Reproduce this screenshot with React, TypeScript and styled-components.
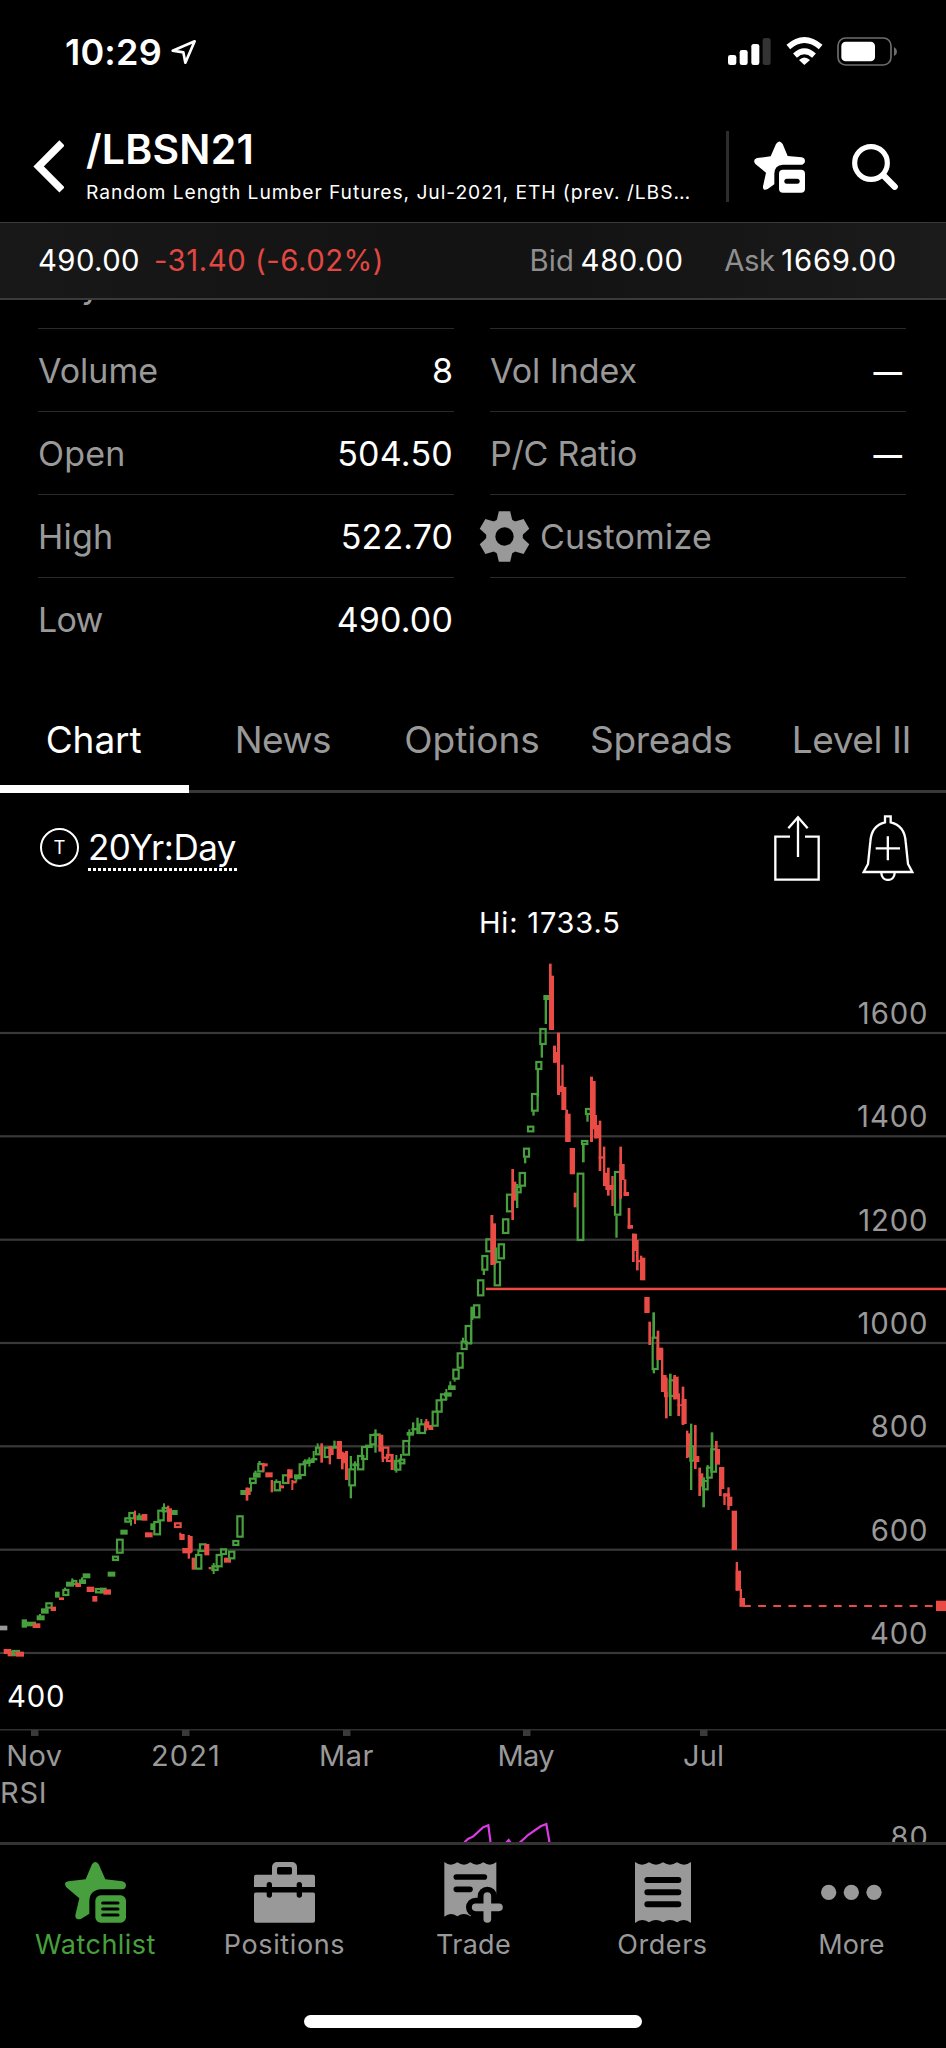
import React from 'react';
import styled, { createGlobalStyle, css } from 'styled-components';

const color = {
  bg: '#000000',
  text: '#ffffff',
  muted: '#999999',
  rule: '#2a2a2a',
  line: '#383838',
  up: '#47a03d',
  down: '#ea4b45',
  rsi: '#dc3ae6',
};

const GlobalStyle = createGlobalStyle`
  * { box-sizing: border-box; }
  html, body { margin: 0; background: ${color.bg}; }
  body { font-family: Inter, "Liberation Sans", sans-serif; color: ${color.text}; }
  svg { display: block; flex: none; }
`;

const Screen = styled.div`
  display: flex;
  flex-direction: column;
  width: 100%;
  height: 2048px;
  overflow: hidden;
  background: ${color.bg};
`;

const Label = styled.span<{ $size: number; $track?: number; $tone?: string; $weight?: number }>`
  font-size: ${p => p.$size}px;
  letter-spacing: ${p => p.$track ?? 0}px;
  color: ${p => p.$tone ?? color.text};
  font-weight: ${p => p.$weight ?? 400};
  white-space: pre;
`;

/* ---------- status bar ---------- */

const StatusBar = styled.div`
  display: flex;
  align-items: center;
  height: 104px;
  padding: 0 49px 1px 65px;
  flex: none;
`;

const LocationArrow = styled.svg`
  margin-left: 9px;
`;

const StatusIcons = styled.div`
  display: flex;
  align-items: center;
  gap: 14.5px;
  margin-left: auto;
`;

/* ---------- header ---------- */

const Header = styled.header`
  display: flex;
  align-items: center;
  height: 118px;
  padding: 7px 48px 0 33px;
  flex: none;
`;

const TitleBlock = styled.div`
  display: flex;
  flex-direction: column;
  width: 640px;
  height: 109px;
  padding-top: 12px;
  margin-left: 22px;
`;

const Title = styled(Label)`
  line-height: 50px;
`;

const Subtitle = styled(Label)`
  line-height: 36px;
`;

const HeaderRule = styled.div`
  width: 3px;
  height: 71px;
  margin: -1px 25px 0 auto;
  background: #2d2d2d;
`;

const HeaderActions = styled.div`
  display: flex;
  align-items: center;
  gap: 47px;
`;

/* ---------- quote strip ---------- */

const QuoteStrip = styled.div`
  display: flex;
  align-items: center;
  height: 78px;
  padding: 0 49px 1px 38px;
  border-top: 1px solid #3a3a3a;
  border-bottom: 2px solid #3a3a3a;
  background: linear-gradient(90deg, #181818 0%, #131313 45%, #131313 60%, #1b1b1b 100%);
  flex: none;
`;

const Change = styled(Label)`
  margin-left: 14px;
`;

const QuotePair = styled.div`
  display: flex;
  align-items: center;
  gap: 6.5px;
  & + & {
    margin-left: 40.5px;
  }
`;

const QuoteSide = styled.div`
  display: flex;
  margin-left: auto;
`;

/* ---------- statistics ---------- */

const Stats = styled.section`
  display: grid;
  grid-template-columns: 416px 416px;
  column-gap: 36px;
  height: 361px;
  padding-left: 38px;
  overflow: hidden;
  flex: none;
`;

const StatColumn = styled.div`
  margin-top: -54px;
`;

const StatRow = styled.div<{ $last?: boolean; $scrolled?: boolean }>`
  display: flex;
  align-items: center;
  justify-content: space-between;
  height: 83px;
  padding: 0 1px ${p => (p.$scrolled ? 4 : 0)}px 0;
  border-bottom: 1px solid ${p => (p.$last ? 'transparent' : color.rule)};
`;

const EmptyValue = styled(Label)`
  padding: 3px 3px 0 0;
`;

const CustomizeRow = styled(StatRow)`
  justify-content: flex-start;
  gap: 10px;
  margin-left: -11px;
  border-bottom: 0;
`;

const ColumnRule = styled.div`
  height: 1px;
  margin-top: -1px;
  background: ${color.rule};
`;

/* ---------- tabs ---------- */

const Tabs = styled.nav`
  display: grid;
  grid-template-columns: repeat(5, 1fr);
  height: 103px;
  margin-top: 29px;
  border-bottom: 3px solid ${color.line};
  flex: none;
`;

const Tab = styled.div<{ $active?: boolean }>`
  position: relative;
  display: flex;
  align-items: center;
  justify-content: center;
  padding: 0 2px 2px 0;
  &:last-child {
    padding-right: 0;
  }
  ${p =>
    p.$active &&
    css`
      &::after {
        content: '';
        position: absolute;
        left: 0;
        right: 0;
        bottom: -3px;
        height: 8px;
        background: ${color.text};
      }
    `}
`;

/* ---------- chart ---------- */

const ChartToolbar = styled.div`
  display: flex;
  align-items: center;
  height: 107px;
  padding: 0 32px 0 40px;
  flex: none;
`;

const TypeBadge = styled.div`
  display: flex;
  align-items: center;
  justify-content: center;
  width: 39px;
  height: 39px;
  margin-top: 1px;
  border: 2px solid ${color.text};
  border-radius: 50%;
`;

const RangeLink = styled(Label)`
  line-height: 47px;
  width: 149px;
  padding-top: 2px;
  margin-left: 9px;
  background: repeating-linear-gradient(90deg, #fff 0 3px, transparent 3px 5.05px) 0 100% / 100% 3px no-repeat;
`;

const ToolbarActions = styled.div`
  display: flex;
  align-items: center;
  gap: 42px;
  margin: 3px 0 0 auto;
`;

const ChartArea = styled.div`
  flex: 1;
  min-height: 0;
  overflow: hidden;
`;

/* ---------- bottom navigation ---------- */

const BottomNav = styled.nav`
  display: grid;
  grid-template-columns: repeat(5, 1fr);
  height: 173px;
  padding-left: 1px;
  border-top: 3px solid #333;
  background: ${color.bg};
  flex: none;
`;

const NavItem = styled.div`
  display: flex;
  flex-direction: column;
  align-items: center;
  padding-top: 17px;
  line-height: 34px;
  gap: 5px;
`;

const HomeArea = styled.div`
  display: flex;
  justify-content: center;
  height: 33px;
  flex: none;
`;

const HomeBar = styled.div`
  width: 338px;
  height: 13px;
  border-radius: 7px;
  background: ${color.text};
`;

/* ---------- icons ---------- */

const Signal = () => (
  <svg width="43" height="29" viewBox="766 111 129 87" fill="#fff">
    <rect x="766" y="165" width="25" height="30" rx="7" />
    <rect x="801" y="150" width="24" height="45" rx="7" />
    <rect x="836" y="132" width="24" height="63" rx="7" />
    <rect x="870" y="114" width="24" height="81" rx="7" fill="#333" />
  </svg>
);

const Wifi = () => (
  <svg width="37" height="29" viewBox="937 111 111 87" fill="none" stroke="#fff" strokeWidth="17">
    <path d="M944 141 Q992 99 1041 141" />
    <path d="M964 167 Q992 141 1021 167" />
    <path d="M976 180 Q992 165 1009 180 L992 195 Z" fill="#fff" stroke="none" />
  </svg>
);

const Battery = () => (
  <svg width="60" height="29" viewBox="1092 111 180 87">
    <rect x="1095" y="114" width="159" height="81" rx="23" fill="none" stroke="#6e6e6e" strokeWidth="5" />
    <rect x="1105" y="125" width="101" height="59" rx="13" fill="#fff" />
    <path d="M1263 141 Q1272 146 1272 155 Q1272 164 1263 169 Z" fill="#6e6e6e" />
  </svg>
);

const StarMinus = () => (
  <svg width="51" height="52" viewBox="843 421 153 156" fill="#fff">
    <path d="M909 430 Q919 415 929 430 L944 466 L986 470 Q996 472 996 482 Q996 490 988 492 L930 492 Q904 494 904 519 L904 551 L884 565 Q869 572 870 557 L879 516 L847 490 Q838 477 852 472 L893 467 Z" />
    <rect x="918" y="507" width="78" height="69" rx="12" />
    <rect x="934" y="534" width="46" height="15" rx="7.5" fill="#000" />
  </svg>
);

const Search = () => (
  <svg width="46" height="46" viewBox="1138 431 138 138" fill="none" stroke="#fff">
    <circle cx="1195" cy="488" r="49" strokeWidth="15.5" />
    <path d="M1234 527 L1266 559" strokeWidth="19" strokeLinecap="round" />
  </svg>
);

const Gear = () => {
  const arm = 'M-17 -76 L17 -76 L23 -50 L23 50 L17 76 L-17 76 L-23 50 L-23 -50 Z';
  return (
    <svg width="51" height="51" viewBox="-76.5 -76.5 153 153" fill={color.muted}>
      <path d={arm} />
      <path d={arm} transform="rotate(60)" />
      <path d={arm} transform="rotate(120)" />
      <circle r="55" />
      <circle r="27.5" fill="#000" />
    </svg>
  );
};

const Share = () => (
  <svg width="46" height="66" viewBox="903 466 138 198" fill="none" stroke="#fff" strokeWidth="7">
    <path d="M951 531 H907 V660 H1037 V531 H996" />
    <path d="M975 592 V474" />
    <path d="M946 506 L975 473 L1004 506" />
  </svg>
);

const BellPlus = () => (
  <svg width="52" height="66" viewBox="1167 465 156 198" fill="none" stroke="#fff" strokeWidth="7">
    <path d="M1236 487 V469 H1253 V487 C1284 494 1296 515 1298 545 L1305 612 L1318 636 H1172 L1185 612 L1192 545 C1194 515 1206 494 1236 487 Z" />
    <path d="M1225 638 C1225 667 1265 667 1265 638" />
    <path d="M1208 565 H1281 M1244.5 529 V601" />
  </svg>
);

const WatchlistIcon = () => (
  <svg width="61" height="61" viewBox="194 396 183 183" fill={color.up}>
    <path d="M275 403 Q285 389 295 403 L315 448 L366 454 Q377 457 377 466 Q376 478 366 478 L303 478 Q268 480 267 513 L267 551 L243 566 Q225 573 225 556 L237 505 L198 472 Q188 457 204 454 L256 448 Z" />
    <rect x="285" y="496" width="92" height="82" rx="16" />
    <path d="M307 519 H353 M307 537 H353 M307 555 H353" stroke="#000" strokeWidth="9" strokeLinecap="round" />
  </svg>
);

const BriefcaseIcon = () => (
  <svg width="61" height="61" viewBox="762 396 183 183" fill={color.muted}>
    <rect x="816" y="396" width="75" height="60" rx="15" />
    <rect x="831" y="411" width="45" height="23" rx="5" fill="#000" />
    <rect x="762" y="434" width="183" height="37" rx="6" />
    <rect x="762" y="460" width="183" height="11" />
    <rect x="762" y="487" width="183" height="91" rx="6" />
    <rect x="762" y="471" width="183" height="16" fill="#000" />
    <rect x="800" y="456" width="16" height="47" rx="8" fill="#000" />
    <rect x="890" y="456" width="16" height="47" rx="8" fill="#000" />
  </svg>
);

const TradeIcon = () => (
  <svg width="59" height="61" viewBox="1332 396 177 183">
    <path
      d="M1333 396 Q1343 404 1352 404 Q1362 404 1372 397 Q1382 404 1392 404 Q1401 404 1411 397 Q1421 404 1430 404 Q1440 404 1450 397 Q1460 404 1469 404 Q1479 404 1489 396 V560 Q1479 552 1469 552 Q1460 552 1450 559 Q1440 552 1430 552 Q1421 552 1411 559 Q1401 552 1392 552 Q1382 552 1372 559 Q1362 552 1352 552 Q1343 552 1333 560 Z"
      fill={color.muted}
    />
    <path d="M1369 441 H1453 M1369 478 H1410" stroke="#000" strokeWidth="17" strokeLinecap="round" />
    <path d="M1462 499 V568 M1427 532 H1497" stroke="#000" strokeWidth="58" strokeLinecap="round" />
    <path d="M1462 498 V567 M1427 532 H1497" stroke={color.muted} strokeWidth="23" strokeLinecap="round" />
  </svg>
);

const OrdersIcon = () => (
  <svg width="56" height="61" viewBox="485 396 168 183">
    <path
      d="M485 396 Q496 404 506 404 Q516 404 527 397 Q538 404 548 404 Q558 404 569 397 Q580 404 590 404 Q600 404 611 397 Q622 404 632 404 Q642 404 653 396 V579 Q642 570 632 570 Q622 570 611 577 Q600 570 590 570 Q580 570 569 577 Q558 570 548 570 Q538 570 527 577 Q516 570 506 570 Q496 570 485 579 Z"
      fill={color.muted}
    />
    <path d="M522 450 H615 M522 487 H615 M522 523 H615" stroke="#000" strokeWidth="18" strokeLinecap="round" />
  </svg>
);

const MoreIcon = () => (
  <svg width="61" height="61" viewBox="1045 396 183 183" fill={color.muted}>
    <circle cx="1068" cy="487" r="23" />
    <circle cx="1136" cy="487" r="23" />
    <circle cx="1204" cy="487" r="23" />
  </svg>
);

/* ---------- candle data ---------- */

// Marks are [kind, left, top, right, bottom] in thirds of a pixel.
// u: solid up, o: hollow up, d: solid down, h: hollow down, n: neutral
type Mark = [string, number, number, number, number];

const novToJan: Mark[] = [
  ['n', 0, 977, 22, 991], ['d', 11, 1047, 34, 1062], ['d', 23, 1053, 47, 1069], ['o', 35, 1050, 60, 1067], ['d', 48, 1055, 72, 1070],
  ['u', 65, 958, 81, 983], ['u', 78, 965, 108, 979], ['d', 98, 970, 121, 984], ['u', 110, 946, 134, 961], ['u', 117, 942, 123, 950],
  ['u', 123, 925, 146, 941], ['o', 136, 907, 158, 926], ['d', 152, 920, 168, 933], ['u', 165, 875, 179, 893], ['d', 177, 892, 192, 900],
  ['o', 187, 867, 208, 888], ['u', 192, 863, 198, 870], ['u', 198, 845, 222, 860], ['u', 214, 835, 220, 848], ['o', 214, 840, 232, 855],
  ['d', 226, 848, 243, 861], ['u', 237, 838, 258, 852], ['u', 243, 832, 249, 840], ['u', 248, 820, 271, 835], ['d', 260, 860, 283, 876],
  ['d', 277, 888, 292, 905], ['o', 285, 864, 308, 880], ['u', 300, 863, 320, 880], ['d', 310, 868, 333, 884], ['u', 323, 815, 346, 830],
  ['o', 336, 767, 357, 783], ['o', 348, 716, 371, 761], ['u', 361, 689, 383, 704], ['o', 373, 652, 393, 668], ['o', 385, 636, 405, 658],
  ['u', 390, 660, 396, 677], ['d', 402, 632, 408, 672], ['u', 409, 646, 427, 661], ['u', 415, 640, 421, 650], ['d', 425, 642, 442, 662],
  ['d', 435, 697, 458, 712], ['u', 451, 670, 463, 690], ['o', 460, 663, 483, 706], ['o', 472, 629, 494, 664], ['u', 489, 610, 495, 632],
  ['o', 485, 621, 505, 637], ['u', 510, 630, 533, 645], ['d', 501, 617, 508, 665], ['d', 503, 625, 516, 665], ['h', 522, 667, 545, 684],
  ['d', 538, 702, 554, 720], ['d', 538, 698, 544, 706], ['d', 547, 744, 575, 760], ['d', 563, 705, 570, 776], ['d', 566, 708, 578, 757],
  ['d', 575, 773, 585, 809], ['o', 585, 762, 607, 809], ['u', 592, 748, 598, 765], ['o', 597, 730, 620, 756], ['d', 613, 732, 628, 766],
  ['d', 626, 801, 634, 808], ['o', 634, 796, 656, 813], ['u', 638, 789, 644, 822], ['o', 647, 762, 668, 802], ['o', 660, 745, 681, 765],
  ['d', 672, 773, 693, 788], ['o', 684, 752, 706, 778], ['o', 697, 720, 718, 738], ['o', 709, 646, 731, 713], ['u', 721, 570, 740, 585],
  ['d', 737, 563, 752, 585], ['d', 737, 563, 745, 602], ['o', 747, 533, 770, 552], ['u', 750, 550, 756, 575], ['u', 759, 518, 782, 533],
  ['u', 763, 512, 770, 522], ['o', 772, 489, 793, 517], ['u', 775, 483, 782, 492], ['d', 785, 490, 803, 499], ['d', 787, 490, 793, 515],
  ['d', 796, 517, 818, 532], ['d', 812, 540, 819, 577], ['o', 821, 543, 843, 574], ['u', 826, 538, 832, 546], ['d', 840, 556, 852, 565],
  ['o', 846, 523, 868, 552], ['d', 862, 508, 878, 535], ['d', 862, 508, 868, 552], ['d', 874, 540, 880, 570], ['d', 876, 542, 890, 550],
];

const febToApr: Mark[] = [
  ['u', 222, 523, 245, 538], ['u', 226, 525, 232, 545], ['o', 236, 490, 258, 528], ['u', 248, 482, 272, 492], ['u', 252, 478, 259, 500],
  ['u', 260, 478, 284, 489], ['u', 265, 472, 271, 500], ['u', 274, 474, 292, 481], ['u', 278, 453, 284, 482], ['o', 285, 440, 302, 466],
  ['u', 290, 430, 296, 445], ['o', 311, 440, 332, 474], ['d', 301, 430, 309, 488], ['d', 326, 438, 341, 465], ['d', 326, 438, 333, 493],
  ['u', 340, 422, 347, 445], ['u', 335, 438, 355, 446], ['d', 350, 423, 366, 477], ['d', 363, 458, 378, 490], ['d', 363, 455, 371, 508],
  ['d', 375, 453, 384, 540], ['o', 385, 505, 408, 559], ['u', 389, 468, 396, 508], ['u', 389, 558, 396, 595], ['u', 397, 490, 418, 499],
  ['u', 402, 484, 408, 510], ['o', 411, 465, 433, 511], ['o', 423, 438, 444, 480], ['u', 435, 434, 458, 444], ['o', 448, 402, 470, 436],
  ['u', 463, 388, 470, 458], ['u', 460, 400, 482, 408], ['d', 475, 404, 490, 455], ['h', 485, 440, 508, 476], ['d', 485, 440, 492, 486],
  ['h', 498, 462, 518, 486], ['d', 512, 462, 521, 510], ['o', 522, 480, 544, 512], ['u', 526, 465, 532, 518], ['o', 536, 476, 556, 493],
  ['u', 540, 462, 546, 480], ['o', 547, 420, 570, 467], ['u', 560, 396, 582, 407], ['u', 565, 388, 571, 425], ['u', 576, 367, 583, 402],
  ['u', 574, 384, 594, 391], ['u', 589, 353, 596, 402], ['o', 595, 370, 618, 402], ['u', 601, 357, 607, 375], ['d', 613, 364, 628, 384],
  ['d', 616, 357, 622, 392], ['d', 625, 375, 640, 390], ['o', 635, 332, 656, 380], ['o', 647, 298, 668, 338], ['o', 660, 280, 681, 302],
  ['u', 672, 277, 695, 290], ['u', 676, 267, 682, 300], ['u', 684, 256, 707, 270], ['u', 688, 244, 694, 260], ['o', 697, 206, 719, 239],
  ['u', 701, 238, 707, 245], ['o', 710, 157, 731, 206], ['o', 722, 122, 743, 150], ['u', 726, 113, 732, 125], ['o', 734, 75, 756, 133],
  ['u', 751, 20, 760, 60], ['u', 751, 60, 757, 133],
];

const aprToJun: Mark[] = [
  ['o', 99, 1123, 121, 1165], ['o', 111, 1048, 133, 1099], ['o', 124, 975, 145, 1022], ['u', 128, 1020, 135, 1035], ['o', 136, 925, 158, 967],
  ['u', 165, 953, 172, 1000], ['o', 161, 993, 183, 1069], ['d', 151, 855, 160, 1005], ['d', 153, 880, 168, 1004], ['u', 165, 953, 171, 996],
  ['o', 173, 940, 195, 988], ['o', 186, 865, 208, 912], ['o', 198, 791, 220, 847], ['d', 214, 717, 222, 870], ['d', 216, 755, 229, 812],
  ['o', 226, 768, 245, 790], ['u', 228, 762, 235, 834], ['o', 236, 726, 258, 770], ['o', 249, 653, 270, 683], ['u', 252, 682, 259, 700],
  ['o', 261, 587, 283, 607], ['o', 273, 489, 296, 545], ['u', 277, 543, 284, 557], ['o', 286, 393, 307, 420], ['u', 290, 420, 297, 500],
  ['o', 298, 294, 320, 345], ['u', 302, 344, 309, 383], ['u', 310, 195, 328, 210], ['u', 314, 195, 321, 282], ['d', 327, 101, 335, 300],
  ['d', 327, 137, 342, 300], ['d', 339, 347, 348, 398], ['d', 339, 366, 356, 398], ['d', 351, 308, 360, 495], ['d', 351, 467, 371, 486],
  ['d', 364, 404, 371, 486], ['d', 364, 471, 379, 540], ['d', 376, 539, 384, 635], ['d', 376, 551, 392, 636], ['d', 389, 654, 405, 733],
  ['d', 401, 788, 410, 832], ['o', 410, 728, 433, 933], ['o', 423, 630, 445, 645], ['u', 426, 645, 434, 697], ['o', 435, 534, 455, 555],
  ['u', 439, 555, 446, 575], ['d', 450, 440, 459, 636], ['d', 450, 453, 467, 598], ['d', 463, 555, 471, 625], ['d', 463, 585, 483, 625],
  ['d', 476, 572, 484, 723], ['d', 476, 679, 495, 686], ['d', 489, 650, 496, 768], ['d', 489, 728, 507, 768], ['d', 501, 713, 509, 797],
  ['d', 496, 765, 521, 780], ['d', 514, 738, 521, 828], ['o', 522, 723, 544, 857], ['u', 526, 857, 533, 923], ['d', 538, 650, 546, 806],
  ['d', 538, 702, 554, 750], ['d', 551, 748, 559, 798], ['d', 551, 786, 567, 798], ['d', 563, 834, 571, 896], ['d', 563, 885, 579, 896],
  ['d', 576, 911, 584, 996], ['d', 576, 911, 591, 963], ['d', 588, 930, 596, 1021], ['d', 588, 990, 608, 997], ['d', 600, 977, 607, 1050],
  ['d', 601, 983, 616, 1051], ['d', 613, 1101, 629, 1149],
];

const junToJul: Mark[] = [
  ['d', 175, 185, 183, 255], ['u', 187, 157, 195, 235], ['o', 185, 230, 206, 330], ['u', 188, 330, 195, 340], ['d', 200, 212, 208, 300],
  ['d', 200, 263, 219, 300], ['d', 213, 265, 220, 396], ['d', 213, 345, 230, 396], ['d', 225, 353, 233, 475], ['d', 222, 395, 233, 412],
  ['o', 236, 358, 255, 411], ['u', 237, 341, 245, 468], ['d', 250, 345, 258, 418], ['d', 250, 350, 266, 418], ['d', 262, 400, 270, 468],
  ['d', 262, 433, 280, 438], ['d', 275, 380, 283, 495], ['d', 275, 417, 290, 492], ['d', 288, 512, 295, 594], ['d', 288, 520, 302, 592],
  ['o', 298, 556, 314, 605], ['u', 300, 491, 307, 690], ['d', 312, 495, 320, 627], ['d', 312, 588, 328, 606], ['d', 325, 623, 333, 708],
  ['d', 328, 640, 340, 680], ['o', 336, 660, 356, 691], ['u', 337, 652, 345, 742], ['o', 348, 620, 368, 656], ['u', 350, 615, 356, 660],
  ['o', 361, 565, 381, 638], ['u', 362, 517, 370, 630], ['d', 375, 543, 383, 612], ['d', 375, 567, 390, 614], ['d', 387, 621, 395, 708],
  ['d', 387, 621, 403, 687], ['d', 400, 700, 407, 735], ['d', 400, 700, 420, 710], ['d', 412, 682, 419, 750], ['d', 412, 710, 427, 738],
  ['d', 425, 752, 441, 870], ['d', 437, 906, 444, 992], ['d', 437, 932, 453, 992], ['d', 449, 987, 456, 1040], ['d', 449, 1014, 465, 1040],
];

const Candles = ({ x, y, marks }: { x: number; y: number; marks: Mark[] }) => (
  <g transform={`translate(${x} ${y}) scale(0.33333)`}>
    {marks.map(([kind, l, t, r, b], i) => {
      const tone = kind === 'n' ? color.muted : kind === 'u' || kind === 'o' ? color.up : color.down;
      const hollow = kind === 'o' || kind === 'h';
      return hollow ? (
        <rect key={i} x={l + 3} y={t + 3} width={r - l - 6} height={b - t - 6} fill="none" stroke={tone} strokeWidth="6.6" />
      ) : (
        <rect key={i} x={l} y={t} width={r - l} height={b - t} fill={tone} />
      );
    })}
  </g>
);

const gridLevels: [string, number][] = [
  ['1600', 133], ['1400', 236.3], ['1200', 339.7], ['1000', 443], ['800', 546.3], ['600', 649.7], ['400', 753],
];

const months: [string, number, number, number][] = [
  ['Nov', 6.3, 31, 0.4], ['2021', 151, 182, 1.1], ['Mar', 319, 343, 0.5], ['May', 497.5, 523, -0.7], ['Jul', 683, 700, 0.2],
];

const PriceChart = () => (
  <svg width="946" height="942" viewBox="0 0 946 942" fontFamily="Inter, sans-serif" fontSize="29.3">
    {gridLevels.map(([name, y]) => (
      <g key={name}>
        <rect x="0" y={y - 1.1} width="946" height="2.2" fill={color.line} />
        <text x="928.5" y={y - 9.2} textAnchor="end" fill={color.muted} letterSpacing="0.9">
          {name}
        </text>
      </g>
    ))}
    <Candles x={0} y={400} marks={novToJan} />
    <Candles x={220} y={400} marks={febToApr} />
    <Candles x={440} y={30} marks={aprToJun} />
    <Candles x={590} y={360} marks={junToJul} />
    <rect x="486" y="387.7" width="460" height="2.5" fill={color.down} />
    <path d="M743 706 H933" stroke={color.down} strokeWidth="2.2" strokeDasharray="7.8 7.35" />
    <rect x="936" y="700.7" width="10" height="10.3" fill={color.down} />
    <text x="479" y="33.3" fill="#fff" fontSize="29" letterSpacing="0.8">Hi: 1733.5</text>
    <text x="7" y="807" fill="#fff" letterSpacing="0.8">400</text>
    <rect x="0" y="829" width="946" height="1.5" fill="#303030" />
    {months.map(([name, x, tick, track]) => (
      <g key={name}>
        <rect x={tick} y="830" width="7.5" height="6" fill="#3a3a3a" />
        <text x={x} y="865.5" fill={color.muted} fontSize="29" letterSpacing={track}>
          {name}
        </text>
      </g>
    ))}
    <text x="0" y="903" fill={color.muted} fontSize="29" letterSpacing="0.8">RSI</text>
    <text x="890.5" y="947" fill={color.muted} fontSize="29" letterSpacing="1">80</text>
    <g transform="translate(473 830) scale(0.33333)" fill="none" stroke={color.rsi} strokeWidth="6.6">
      <path d="M-26 337 L-14 326 L0 320 L30 292 L46 286 L53 340" />
      <path d="M98 340 L107 330 L114 340" />
      <path d="M138 340 L165 315 L203 289 L220 282 L230 340" />
    </g>
  </svg>
);

/* ---------- page data ---------- */

const leftStats: [string, number, string, number][] = [
  ['Day', 0, '', 0],
  ['Volume', 0, '8', 0],
  ['Open', 0.2, '504.50', 0.25],
  ['High', 0.2, '522.70', 0.1],
  ['Low', -0.8, '490.00', 0.14],
];

const rightStats: [string, number, string][] = [
  ['', 0, ''],
  ['Vol Index', -0.05, '—'],
  ['P/C Ratio', -0.19, '—'],
];

const tabs: [string, number][] = [
  ['Chart', -0.1], ['News', -0.6], ['Options', 0], ['Spreads', -0.35], ['Level II', -0.45],
];

const navItems = [
  { name: 'Watchlist', track: 0.48, Icon: WatchlistIcon, active: true },
  { name: 'Positions', track: 0.61, Icon: BriefcaseIcon },
  { name: 'Trade', track: 0.31, Icon: TradeIcon },
  { name: 'Orders', track: 0.54, Icon: OrdersIcon },
  { name: 'More', track: 0.07, Icon: MoreIcon },
];

export default function App() {
  return (
    <>
      <GlobalStyle />
      <Screen>
        <StatusBar>
          <Label $size={36} $weight={600} $track={0.2}>10:29</Label>
          <LocationArrow width="26" height="26" viewBox="512 114 78 78" fill="none" stroke="#fff" strokeWidth="8" strokeLinejoin="round">
            <path d="M517 149 L583 121 L555 185 L549 154 Z" />
          </LocationArrow>
          <StatusIcons>
            <Signal />
            <Wifi />
            <Battery />
          </StatusIcons>
        </StatusBar>

        <Header>
          <svg width="31" height="53" viewBox="33 140.5 31 53" fill="none" stroke="#fff" strokeWidth="7.4">
            <path d="M62 143.4 L38.6 166.9 L62 190.4" />
          </svg>
          <TitleBlock>
            <Title $size={41} $weight={600} $track={0.24}>/LBSN21</Title>
            <Subtitle $size={19.3} $track={0.92}>Random Length Lumber Futures, Jul-2021, ETH (prev. /LBS…</Subtitle>
          </TitleBlock>
          <HeaderRule />
          <HeaderActions>
            <StarMinus />
            <Search />
          </HeaderActions>
        </Header>

        <QuoteStrip>
          <Label $size={29.3} $track={0.4}>490.00</Label>
          <Change $size={29.3} $track={0.54} $tone="#e24842">-31.40 (-6.02%)</Change>
          <QuoteSide>
            <QuotePair>
              <Label $size={29.3} $track={0.1} $tone="#8f8f8f">Bid</Label>
              <Label $size={29.3} $track={0.61}>480.00</Label>
            </QuotePair>
            <QuotePair>
              <Label $size={29.3} $track={-0.4} $tone="#8f8f8f">Ask</Label>
              <Label $size={29.3} $track={0.77}>1669.00</Label>
            </QuotePair>
          </QuoteSide>
        </QuoteStrip>

        <Stats>
          <StatColumn>
            {leftStats.map(([name, track, value, valueTrack], i) => (
              <StatRow key={name} $scrolled={i === 0} $last={i === leftStats.length - 1}>
                <Label $size={34} $track={track} $tone={color.muted}>{name}</Label>
                {value && <Label $size={34} $track={valueTrack}>{value}</Label>}
              </StatRow>
            ))}
          </StatColumn>
          <StatColumn>
            {rightStats.map(([name, track, value]) => (
              <StatRow key={name}>
                {name && <Label $size={34} $track={track} $tone={color.muted}>{name}</Label>}
                {value && <EmptyValue $size={28.5} $weight={600}>{value}</EmptyValue>}
              </StatRow>
            ))}
            <CustomizeRow>
              <Gear />
              <Label $size={34} $track={0.2} $tone={color.muted}>Customize</Label>
            </CustomizeRow>
            <ColumnRule />
          </StatColumn>
        </Stats>

        <Tabs>
          {tabs.map(([name, track], i) => (
            <Tab key={name} $active={i === 0}>
              <Label $size={37} $track={track} $tone={i === 0 ? color.text : color.muted}>{name}</Label>
            </Tab>
          ))}
        </Tabs>

        <ChartToolbar>
          <TypeBadge>
            <Label $size={18.5}>T</Label>
          </TypeBadge>
          <RangeLink $size={35} $track={-0.5}>20Yr:Day</RangeLink>
          <ToolbarActions>
            <Share />
            <BellPlus />
          </ToolbarActions>
        </ChartToolbar>

        <ChartArea>
          <PriceChart />
        </ChartArea>

        <BottomNav>
          {navItems.map(({ name, track, Icon, active }) => (
            <NavItem key={name}>
              <Icon />
              <Label $size={27} $track={track} $tone={active ? color.up : color.muted}>{name}</Label>
            </NavItem>
          ))}
        </BottomNav>
        <HomeArea>
          <HomeBar />
        </HomeArea>
      </Screen>
    </>
  );
}
